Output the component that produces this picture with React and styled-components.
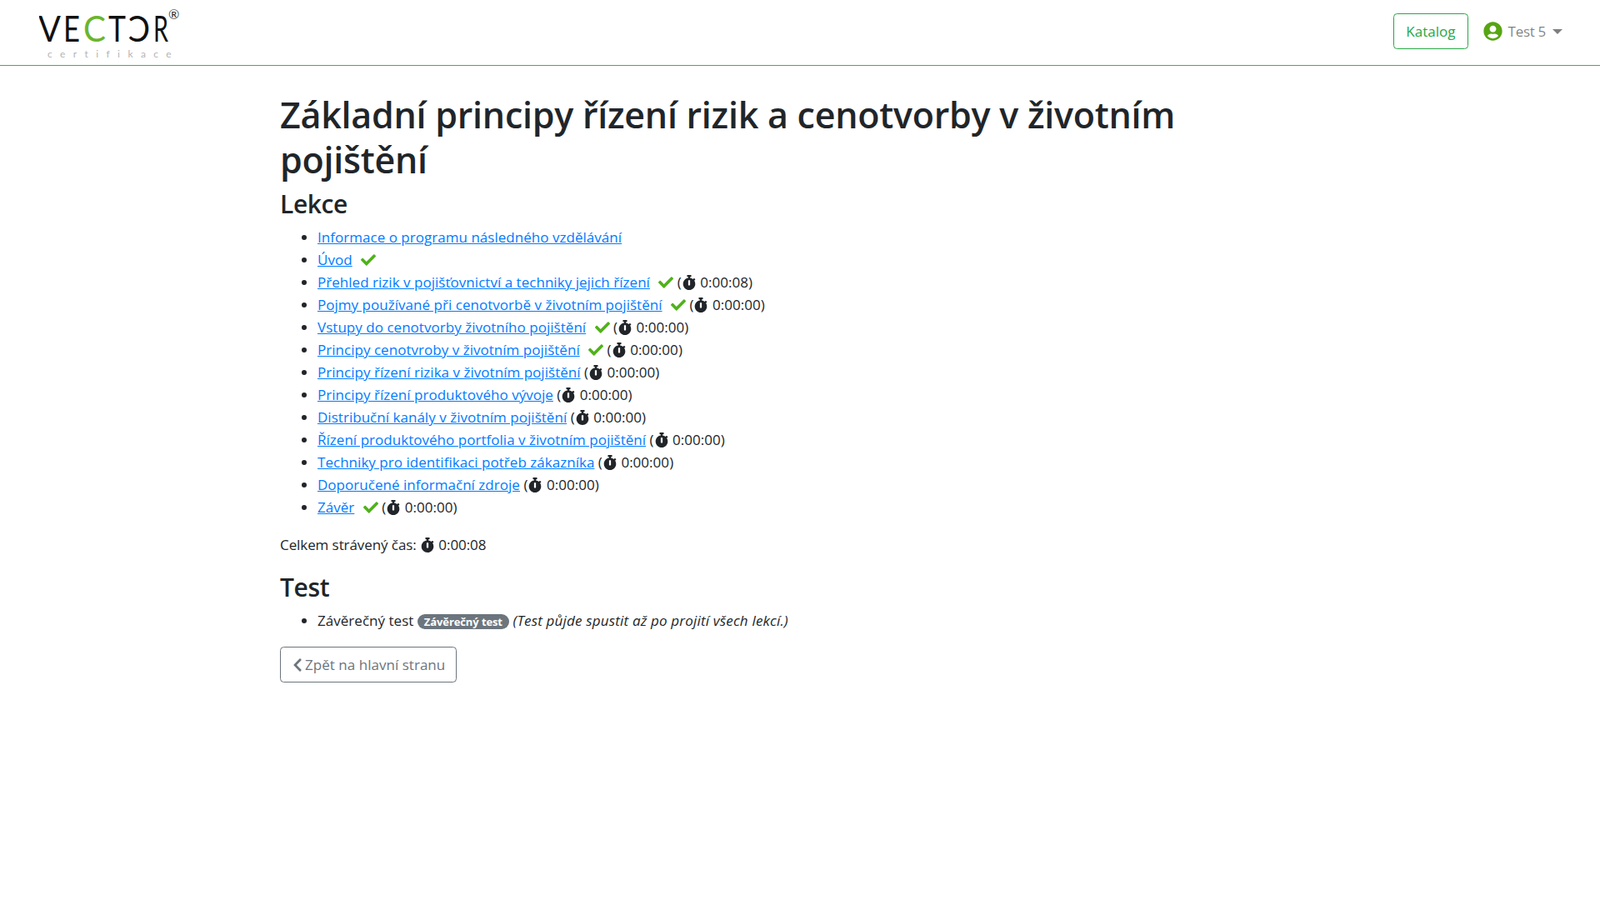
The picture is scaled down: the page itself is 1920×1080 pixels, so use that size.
import React from 'react'
import styled, { createGlobalStyle } from 'styled-components'
import { FaCheck, FaStopwatch, FaUserCircle, FaChevronLeft } from 'react-icons/fa'

const colours = {
  text: '#212529',
  link: '#007bff',
  green: '#28a745',
  check: '#4fb21a',
  grey: '#6c757d',
}

const lessons = [
  { name: 'Informace o programu následného vzdělávání' },
  { name: 'Úvod', done: true },
  { name: 'Přehled rizik v pojišťovnictví a techniky jejich řízení', done: true, time: '0:00:08' },
  { name: 'Pojmy používané při cenotvorbě v životním pojištění', done: true, time: '0:00:00' },
  { name: 'Vstupy do cenotvorby životního pojištění', done: true, time: '0:00:00' },
  { name: 'Principy cenotvroby v životním pojištění', done: true, time: '0:00:00' },
  { name: 'Principy řízení rizika v životním pojištění', time: '0:00:00' },
  { name: 'Principy řízení produktového vývoje', time: '0:00:00' },
  { name: 'Distribuční kanály v životním pojištění', time: '0:00:00' },
  { name: 'Řízení produktového portfolia v životním pojištění', time: '0:00:00' },
  { name: 'Techniky pro identifikaci potřeb zákazníka', time: '0:00:00' },
  { name: 'Doporučené informační zdroje', time: '0:00:00' },
  { name: 'Závěr', done: true, time: '0:00:00' },
]

const GlobalStyle = createGlobalStyle`
  html {
    font-size: 18px;
  }
  body {
    margin: 0;
    background: #fff;
    color: ${colours.text};
    font-family: 'Open Sans', 'Liberation Sans', sans-serif;
    font-size: 17px;
    line-height: 27px;
    letter-spacing: 0.03px;
  }
`

const Navbar = styled.header`
  height: 75px;
  border-bottom: 1px solid #3fb04a;
  display: flex;
  align-items: center;
  justify-content: space-between;
  padding: 0 45px 3px 47px;
`

const LogoImage = styled.svg`
  display: block;
  margin-top: 3px;
`

const Nav = styled.nav`
  display: flex;
  align-items: center;
  gap: 18px;
`

const CatalogButton = styled.a`
  display: block;
  height: 43px;
  box-sizing: border-box;
  padding: 7px 14px;
  border: 1px solid ${colours.green};
  border-radius: 4.5px;
  color: ${colours.green};
`

const UserMenu = styled.div`
  display: flex;
  align-items: center;
  color: rgba(0, 0, 0, 0.5);
  letter-spacing: -0.3px;
  svg {
    font-size: 23px;
    color: #57a512;
    margin-right: 7px;
  }
  &::after {
    content: '';
    margin-left: 8px;
    border-top: 6px solid rgba(0, 0, 0, 0.5);
    border-left: 6px solid transparent;
    border-right: 6px solid transparent;
  }
`

const Main = styled.main`
  width: 1248px;
  margin-left: 336px;
  padding-top: 32px;
`

const Title = styled.h1`
  max-width: 1150px;
  margin: 0 0 7px;
  font-size: 43px;
  line-height: 54px;
  font-weight: 600;
  letter-spacing: -0.25px;
`

const SectionTitle = styled.h3`
  margin: 0 0 7px;
  font-size: 30px;
  line-height: 38px;
  font-weight: 600;
  letter-spacing: -0.4px;
`

const List = styled.ul`
  margin: 0 0 18px;
  padding-left: 45px;
`

const Link = styled.a`
  color: ${colours.link};
  text-decoration: underline;
`

const Check = styled(FaCheck)`
  color: ${colours.check};
  font-size: 18px;
  margin-left: 6px;
  vertical-align: -3px;
`

const Stopwatch = styled(FaStopwatch)`
  font-size: 18px;
  vertical-align: -3px;
`

const Total = styled.p`
  margin: 0 0 19px;
  letter-spacing: -0.08px;
`

const Badge = styled.span`
  display: inline-block;
  padding: 0 8px;
  border-radius: 10px;
  background: ${colours.grey};
  color: #fff;
  font-size: 13px;
  font-weight: 700;
  line-height: 18px;
  letter-spacing: -0.1px;
`

const Note = styled.i`
  letter-spacing: 0.18px;
`

const BackButton = styled.a`
  display: inline-flex;
  align-items: center;
  height: 43px;
  box-sizing: border-box;
  padding: 0 13px 0 11px;
  border: 1px solid ${colours.grey};
  border-radius: 4.5px;
  color: ${colours.grey};
  svg {
    font-size: 18px;
  }
`

const Logo = () => (
  <LogoImage width="170" height="72" viewBox="0 0 170 72" role="img" aria-label="Vector certifikace">
    <g fontFamily="Lato, sans-serif" fontSize="43" fontWeight="400">
      <text x="-1" y="47" fill="#111" textLength="27" lengthAdjust="spacingAndGlyphs">V</text>
      <text x="29" y="47" fill="#111" textLength="20" lengthAdjust="spacingAndGlyphs">E</text>
      <text x="53" y="47" fill="#6cb52d" textLength="27" lengthAdjust="spacingAndGlyphs">C</text>
      <text x="83" y="47" fill="#111" textLength="21" lengthAdjust="spacingAndGlyphs">T</text>
      <text transform="translate(133 47) scale(-1 1)" fill="#111" textLength="26" lengthAdjust="spacingAndGlyphs">C</text>
      <text x="137" y="47" fill="#111" textLength="18" lengthAdjust="spacingAndGlyphs">R</text>
    </g>
    <text x="155" y="20" fontFamily="Lato, sans-serif" fontSize="16" fill="#333">®</text>
    <text x="10" y="66" fontFamily="Lato, sans-serif" fontSize="12" letterSpacing="9.4" fill="#b5b5b5">certifikace</text>
  </LogoImage>
)

const App = () => (
  <>
    <GlobalStyle />
    <Navbar>
      <Logo />
      <Nav>
        <CatalogButton>Katalog</CatalogButton>
        <UserMenu>
          <FaUserCircle />
          Test 5
        </UserMenu>
      </Nav>
    </Navbar>
    <Main>
      <Title>Základní principy řízení rizik a cenotvorby v životním pojištění</Title>
      <SectionTitle>Lekce</SectionTitle>
      <List>
        {lessons.map(({ name, done, time }) => (
          <li key={name}>
            <Link>{name}</Link>
            {done && <> <Check /></>}
            {time && <> (<Stopwatch /> {time})</>}
          </li>
        ))}
      </List>
      <Total>
        Celkem strávený čas: <Stopwatch /> 0:00:08
      </Total>
      <SectionTitle>Test</SectionTitle>
      <List>
        <li>
          Závěrečný test <Badge>Závěrečný test</Badge> <Note>(Test půjde spustit až po projití všech lekcí.)</Note>
        </li>
      </List>
      <BackButton>
        <FaChevronLeft />
        Zpět na hlavní stranu
      </BackButton>
    </Main>
  </>
)

export default App
